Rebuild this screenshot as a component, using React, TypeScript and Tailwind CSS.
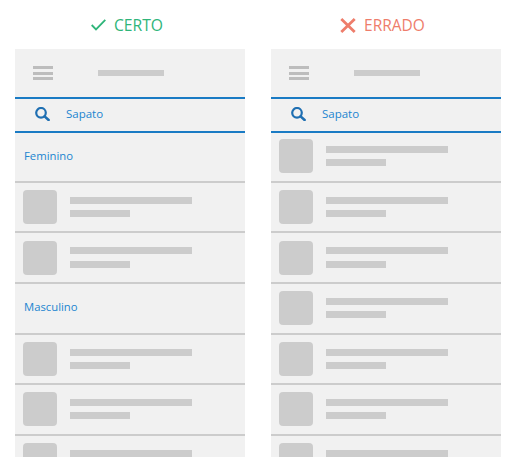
import React from "react";

function SkeletonRow() {
  return (
    <div className="h-[50.6px] shrink-0 flex items-start pl-[8px] pt-[7.2px] border-b-2 border-[#cccccc]">
      <div className="w-[34px] h-[34px] rounded-[4px] bg-[#cccccc] shrink-0" />
      <div className="ml-[13px] pt-[6.8px] flex flex-col gap-[6.3px]">
        <div className="w-[122px] h-[7px] bg-[#cccccc]" />
        <div className="w-[60px] h-[7px] bg-[#cccccc]" />
      </div>
    </div>
  );
}

function SectionRow({ label }: { label: string }) {
  return (
    <div className="h-[50.6px] shrink-0 flex items-center pl-[9px] pb-[1px] border-b-2 border-[#cccccc] text-[11.3px] text-[#2185d0]">
      {label}
    </div>
  );
}

function Phone({ children }: { children: React.ReactNode }) {
  return (
    <div className="w-[230px] h-[408px] bg-[#f1f1f1] flex flex-col overflow-hidden">
      <div className="h-[48px] shrink-0 flex items-center pl-[18px]">
        <div className="flex flex-col gap-[2.5px]">
          <div className="w-[20px] h-[3px] bg-[#bdbdbd]" />
          <div className="w-[20px] h-[3px] bg-[#bdbdbd]" />
          <div className="w-[20px] h-[3px] bg-[#bdbdbd]" />
        </div>
        <div className="ml-[45px] w-[66px] h-[6px] bg-[#cccccc]" />
      </div>
      <div className="h-[36px] shrink-0 border-y-2 border-[#1a7bc4] flex items-center pl-[20px] pb-[2px] text-[11.5px] text-[#2185d0]">
        <svg width="15" height="14" viewBox="0 0 15 14" fill="none" className="shrink-0">
          <circle cx="6" cy="5.8" r="4.8" stroke="#1f6fb2" strokeWidth="2.2" />
          <path d="M9.6 9.4 L13.6 13" stroke="#1f6fb2" strokeWidth="2.6" strokeLinecap="round" />
        </svg>
        <span className="ml-[16px]">Sapato</span>
      </div>
      <div className="-mt-[0.8px] flex flex-col">{children}</div>
    </div>
  );
}

export default function App() {
  return (
    <div className="w-[514px] h-[470px] bg-white font-['Open_Sans',sans-serif] flex gap-[26px] px-[15px]">
      <div className="flex flex-col">
        <div className="h-[49px] flex items-center justify-center gap-[8px] pr-[6px] pt-[1px] text-[15.7px] text-[#2fb57a]">
          <svg width="15" height="12" viewBox="0 0 15 12" fill="none">
            <path d="M0.7 6 L5 10.4 L14.3 0.8" stroke="#2fb57a" strokeWidth="1.8" />
          </svg>
          <span className="mt-[2px]">CERTO</span>
        </div>
        <Phone>
          <SectionRow label="Feminino" />
          <SkeletonRow />
          <SkeletonRow />
          <SectionRow label="Masculino" />
          <SkeletonRow />
          <SkeletonRow />
          <SkeletonRow />
        </Phone>
      </div>
      <div className="flex flex-col">
        <div className="h-[49px] flex items-center justify-center gap-[8px] pr-[7px] pt-[1px] text-[15.5px] text-[#ee7d6b]">
          <svg width="16" height="15" viewBox="0 0 16 15" fill="none">
            <path d="M1.3 1 L14.7 14 M14.7 1 L1.3 14" stroke="#ee7d6b" strokeWidth="2.8" />
          </svg>
          <span className="mt-[2px]">ERRADO</span>
        </div>
        <Phone>
          <SkeletonRow />
          <SkeletonRow />
          <SkeletonRow />
          <SkeletonRow />
          <SkeletonRow />
          <SkeletonRow />
          <SkeletonRow />
        </Phone>
      </div>
    </div>
  );
}
